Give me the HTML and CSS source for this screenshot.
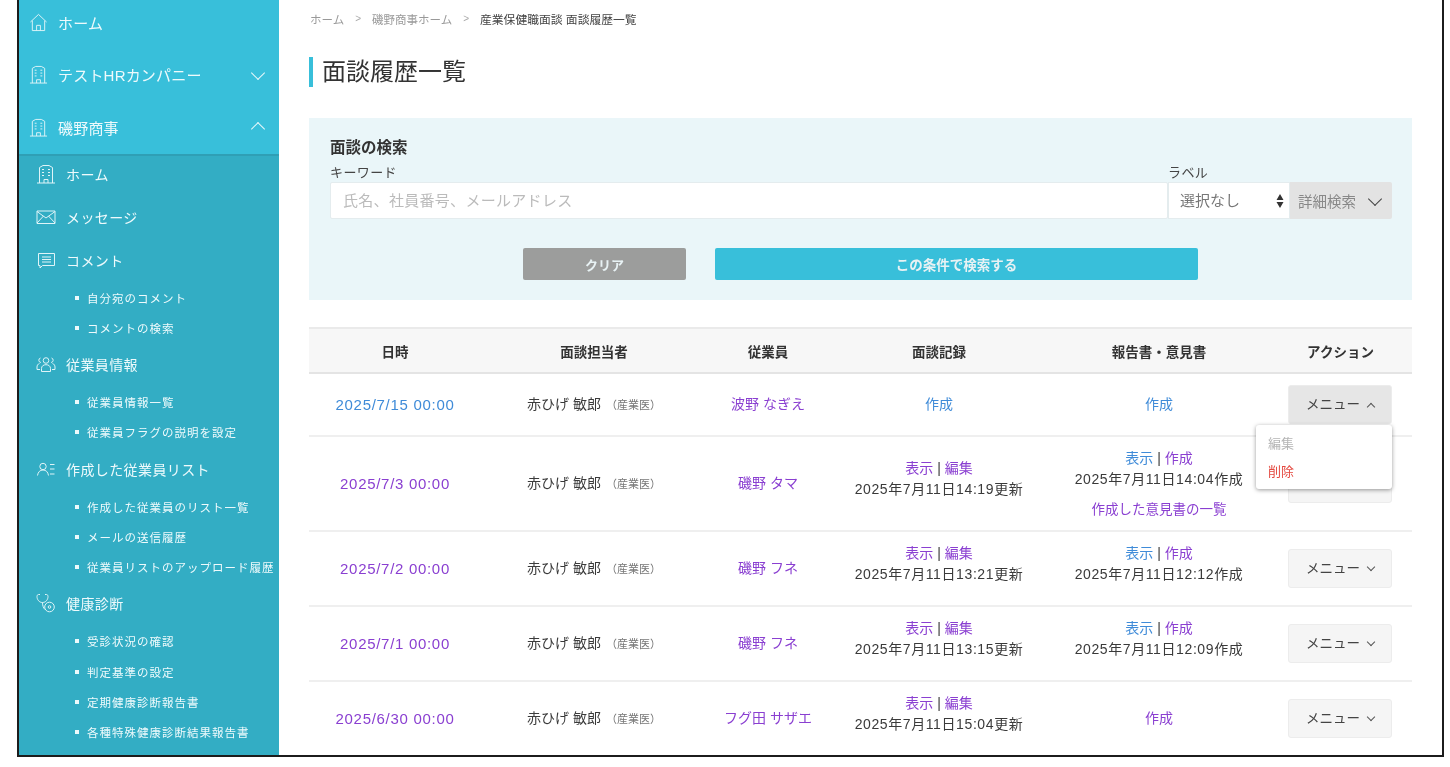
FILE: index.html
```html
<!DOCTYPE html>
<html lang="ja">
  <head>
    <meta charset="UTF-8" />
    <meta name="viewport" content="width=device-width, initial-scale=1.0" />
    <title>面談履歴一覧</title>
    <link rel="stylesheet" href="styles.css">
  </head>
  <body>
    <svg class="icon-defs" width="0" height="0" aria-hidden="true">
      <symbol id="i-home" viewBox="0 0 20 20">
        <path d="M1.5 9.5 10 1.5l8.500 8M3.500 8v10.500h13V8M8 18.500v-5.500h4v5.500" />
      </symbol>
      <symbol id="i-building" viewBox="0 0 20 20">
        <path d="M1 19h18M3.500 19V3.500L7 1.500h6l3.500 2V19M8 19v-3.500h4V19M6 5.500h2M12 5.500h2M6 8.500h2M12 8.500h2M6 11.500h2M12 11.500h2" />
      </symbol>
      <symbol id="i-mail" viewBox="0 0 20 20">
        <path d="M1 4h18v12.500H1zM1 4.500l9 6.500 9-6.500M1 16l6.500-7M19 16l-6.500-7" />
      </symbol>
      <symbol id="i-comment" viewBox="0 0 20 20">
        <path d="M2.500 3.500h16v12H6.500L4 18v-2.500H2.500zM6 7h9M6 9.500h9M6 12h9" />
      </symbol>
      <symbol id="i-users" viewBox="0 0 20 20">
        <circle cx="10" cy="6.500" r="2.800" />
        <path d="M5.500 17.500v-3c0-2.500 2-3.800 4.500-3.800s4.500 1.300 4.500 3.800v3zM4.500 4a2.300 2.300 0 0 0 .4 4.500M15.500 4a2.300 2.300 0 0 1-.4 4.500M3.500 9.500C1.800 10 1 11.500 1 13v2.500h3M16.500 9.500c1.700.5 2.500 2 2.500 3.500v2.500h-3" />
      </symbol>
      <symbol id="i-list" viewBox="0 0 20 20">
        <circle cx="7" cy="7.500" r="3.200" />
        <path d="M1.500 16.500c.5-3.500 2.500-5.500 5.500-5.500s5 2 5.500 5.500M14 5.500h4.500M14 10h4.500M14 15h4.500" />
      </symbol>
      <symbol id="i-scope" viewBox="0 0 20 20">
        <path d="M4 1.500H2.500C1.500 1.500 1 2.500 1 3.500 1 6.500 3 9.500 6.500 9.500S12 6.500 12 3.500c0-1-.5-2-1.500-2H9M6.500 9.500c0 3.500 1 5.500 2.500 7" />
        <circle cx="13.500" cy="14" r="4.800" />
        <circle cx="13.500" cy="14" r="1.300" />
      </symbol>
    </svg>

    <div class="frame">
      <nav class="sidebar">
        <div class="nav-top">
          <a class="top-item"><svg class="icon"><use href="#i-home" /></svg>ホーム</a>
          <a class="top-item"><svg class="icon"><use href="#i-building" /></svg>テストHRカンパニー<span class="chev chev-down"></span></a>
          <a class="top-item"><svg class="icon"><use href="#i-building" /></svg>磯野商事<span class="chev chev-up"></span></a>
        </div>
        <div class="nav-sub">
          <a class="sub-item"><svg class="icon"><use href="#i-building" /></svg>ホーム</a>
          <a class="sub-item"><svg class="icon"><use href="#i-mail" /></svg>メッセージ</a>
          <a class="sub-item"><svg class="icon"><use href="#i-comment" /></svg>コメント</a>
          <ul class="leaf-list">
            <li>自分宛のコメント</li>
            <li>コメントの検索</li>
          </ul>
          <a class="sub-item"><svg class="icon"><use href="#i-users" /></svg>従業員情報</a>
          <ul class="leaf-list">
            <li>従業員情報一覧</li>
            <li>従業員フラグの説明を設定</li>
          </ul>
          <a class="sub-item"><svg class="icon"><use href="#i-list" /></svg>作成した従業員リスト</a>
          <ul class="leaf-list">
            <li>作成した従業員のリスト一覧</li>
            <li>メールの送信履歴</li>
            <li>従業員リストのアップロード履歴</li>
          </ul>
          <a class="sub-item"><svg class="icon"><use href="#i-scope" /></svg>健康診断</a>
          <ul class="leaf-list">
            <li>受診状況の確認</li>
            <li>判定基準の設定</li>
            <li>定期健康診断報告書</li>
            <li>各種特殊健康診断結果報告書</li>
          </ul>
        </div>
      </nav>

      <main class="main">
        <div class="breadcrumb">
          <span>ホーム</span><i>&gt;</i><span>磯野商事ホーム</span><i>&gt;</i><b>産業保健職面談 面談履歴一覧</b>
        </div>
        <h1 class="page-title">面談履歴一覧</h1>

        <section class="search">
          <h2>面談の検索</h2>
          <div class="search-row">
            <label class="field field-key">
              <span>キーワード</span>
              <input type="text" placeholder="氏名、社員番号、メールアドレス" />
            </label>
            <label class="field field-label">
              <span>ラベル</span>
              <div class="select">
                <select><option>選択なし</option></select>
                <svg class="updown" viewBox="0 0 8 16"><path d="M4 1 7.500 7h-7zM4 15 .5 9h7z" /></svg>
              </div>
            </label>
            <button class="detail-btn" type="button">詳細検索<span class="chev chev-down"></span></button>
          </div>
          <div class="search-actions">
            <button class="btn btn-clear" type="button">クリア</button>
            <button class="btn btn-submit" type="button">この条件で検索する</button>
          </div>
        </section>

        <table class="history">
          <colgroup>
            <col class="c1" /><col class="c2" /><col class="c3" /><col class="c4" /><col class="c5" /><col class="c6" />
          </colgroup>
          <thead>
            <tr>
              <th>日時</th><th>面談担当者</th><th>従業員</th><th>面談記録</th><th>報告書・意見書</th><th>アクション</th>
            </tr>
          </thead>
          <tbody>
            <tr class="r1">
              <td class="date"><a class="new">2025/7/15 00:00</a></td>
              <td>赤ひげ 敏郎<small>（産業医）</small></td>
              <td><a>波野 なぎえ</a></td>
              <td><a class="new">作成</a></td>
              <td><a class="new">作成</a></td>
              <td class="action">
                <div class="menu-wrap">
                  <button class="menu-btn open" type="button">メニュー<span class="chev chev-up"></span></button>
                  <div class="menu-pop">
                    <div class="off">編集</div>
                    <div class="del">削除</div>
                  </div>
                </div>
              </td>
            </tr>
            <tr class="r2">
              <td class="date"><a>2025/7/3 00:00</a></td>
              <td>赤ひげ 敏郎<small>（産業医）</small></td>
              <td><a>磯野 タマ</a></td>
              <td class="log"><a>表示</a> | <a>編集</a><br /><span class="stamp">2025年7月11日14:19更新</span></td>
              <td><a class="new">表示</a> | <a>作成</a><br /><span class="stamp">2025年7月11日14:04作成</span><div class="opinions"><a>作成した意見書の一覧</a></div></td>
              <td class="action"><button class="menu-btn" type="button">メニュー<span class="chev chev-down"></span></button></td>
            </tr>
            <tr class="r3">
              <td class="date"><a>2025/7/2 00:00</a></td>
              <td>赤ひげ 敏郎<small>（産業医）</small></td>
              <td><a>磯野 フネ</a></td>
              <td class="log"><a>表示</a> | <a>編集</a><br /><span class="stamp">2025年7月11日13:21更新</span></td>
              <td class="log"><a class="new">表示</a> | <a>作成</a><br /><span class="stamp">2025年7月11日12:12作成</span></td>
              <td class="action"><button class="menu-btn" type="button">メニュー<span class="chev chev-down"></span></button></td>
            </tr>
            <tr class="r3">
              <td class="date"><a>2025/7/1 00:00</a></td>
              <td>赤ひげ 敏郎<small>（産業医）</small></td>
              <td><a>磯野 フネ</a></td>
              <td class="log"><a>表示</a> | <a>編集</a><br /><span class="stamp">2025年7月11日13:15更新</span></td>
              <td class="log"><a class="new">表示</a> | <a>作成</a><br /><span class="stamp">2025年7月11日12:09作成</span></td>
              <td class="action"><button class="menu-btn" type="button">メニュー<span class="chev chev-down"></span></button></td>
            </tr>
            <tr class="r3">
              <td class="date"><a>2025/6/30 00:00</a></td>
              <td>赤ひげ 敏郎<small>（産業医）</small></td>
              <td><a>フグ田 サザエ</a></td>
              <td class="log"><a>表示</a> | <a>編集</a><br /><span class="stamp">2025年7月11日15:04更新</span></td>
              <td><a>作成</a></td>
              <td class="action"><button class="menu-btn" type="button">メニュー<span class="chev chev-down"></span></button></td>
            </tr>
          </tbody>
        </table>
      </main>
    </div>
  </body>
</html>
```

FILE: styles.css
```css
* {
  box-sizing: border-box;
}

body {
  margin: 0;
  background: #fff;
  color: #333;
  font-family: "Liberation Sans", "Noto Sans CJK JP", sans-serif;
  font-size: 14px;
}

.icon-defs {
  position: absolute;
}

.frame {
  display: flex;
  width: 1427px;
  height: 757px;
  margin-left: 17px;
  border-left: 2px solid #1c1c1c;
  border-right: 2px solid #1c1c1c;
  border-bottom: 2px solid #1c1c1c;
  overflow: hidden;
  filter: blur(0.5px);
}

/* sidebar */
.sidebar {
  flex: 0 0 260px;
  background: #33adc4;
  color: #eefafc;
  overflow: hidden;
}

.nav-top {
  margin-top: -4px;
  background: #38bfda;
  border-bottom: 2px solid #2f9fb5;
}

.top-item {
  display: flex;
  align-items: center;
  height: 52.5px;
  padding: 0 10px;
  font-size: 15px;
  letter-spacing: 0.2px;
}

.top-item .icon {
  margin-right: 10px;
}

.top-item .chev {
  margin-left: auto;
  margin-right: 6px;
  width: 10px;
  height: 10px;
  border-width: 1.800px;
  border-color: #e8f8fb;
}

.icon {
  flex: none;
  width: 19px;
  height: 19px;
  fill: none;
  stroke: #dff4f8;
  stroke-width: 1;
}

.chev {
  display: inline-block;
  width: 7px;
  height: 7px;
  border-right: 1.500px solid #555;
  border-bottom: 1.500px solid #555;
}

.chev-down {
  transform: translateY(-2px) rotate(45deg);
}

.chev-up {
  transform: translateY(2px) rotate(-135deg);
}

.nav-sub {
  margin-top: -1px;
}

.sub-item {
  display: flex;
  align-items: center;
  height: 38px;
  padding-left: 17px;
  font-size: 14px;
  letter-spacing: 0.4px;
}

.sub-item .icon {
  width: 20px;
  height: 20px;
  margin-right: 10px;
}

.sub-item + .sub-item {
  margin-top: 5px;
}

.leaf-list + .sub-item {
  margin-top: 2px;
}

.leaf-list {
  list-style: none;
  margin: 4px 0 0;
  padding: 0 0 0 56px;
}

.leaf-list li {
  display: flex;
  align-items: center;
  height: 30.250px;
  font-size: 11.500px;
  letter-spacing: 1px;
  white-space: nowrap;
}

.leaf-list li::before {
  content: "";
  flex: none;
  width: 4px;
  height: 4px;
  margin-right: 8px;
  background: #eefafc;
}

/* main */
.main {
  flex: 1;
  min-width: 0;
  padding: 0 30px;
  background: #fff;
}

.breadcrumb {
  display: flex;
  align-items: center;
  height: 37px;
  padding-left: 1px;
  font-size: 11.500px;
  color: #999;
}

.breadcrumb i {
  margin: 0 11px;
  font-style: normal;
  font-size: 10px;
  color: #aaa;
}

.breadcrumb b {
  font-weight: 400;
  font-size: 11.800px;
  color: #444;
}

.page-title {
  display: flex;
  align-items: center;
  height: 30px;
  margin: 20px 0 31px;
  padding-left: 9px;
  border-left: 4px solid #38bfda;
  font-size: 24px;
  line-height: 28px;
  font-weight: 400;
  color: #333;
}

.search {
  height: 182px;
  padding: 20px 20px 0 21px;
  background: #eaf6f9;
}

.search h2 {
  margin: 0;
  font-size: 15.500px;
  line-height: 20px;
  color: #333;
}

.search-row {
  display: flex;
  align-items: flex-end;
  margin-top: 7px;
}

.field span {
  display: block;
  font-size: 13px;
  line-height: 16px;
  margin-bottom: 1px;
  letter-spacing: 0.4px;
  color: #444;
}

.field-key {
  flex: 0 0 838px;
}

.field input {
  display: block;
  width: 100%;
  height: 37px;
  padding: 0 12px;
  border: 1px solid #e4ecee;
  border-radius: 2px;
  background: #fff;
  font: inherit;
  font-size: 15px;
  letter-spacing: 0.3px;
}

.field input::placeholder {
  color: #bbb;
}

.field-label {
  flex: 0 0 122px;
}

.select {
  position: relative;
}

.select select {
  display: block;
  width: 100%;
  height: 37px;
  padding: 0 11px;
  border: 1px solid #e4ecee;
  background: #fff;
  font: inherit;
  font-size: 15px;
  color: #777;
  appearance: none;
}

.updown {
  position: absolute;
  top: 11px;
  right: 6px;
  width: 8px;
  height: 16px;
  fill: #333;
}

.detail-btn {
  display: flex;
  align-items: center;
  justify-content: space-between;
  width: 102px;
  height: 37px;
  padding: 0 12px 0 8px;
  border: 0;
  border-radius: 0 2px 2px 0;
  background: #e3e3e3;
  font: inherit;
  font-size: 14.500px;
  color: #888;
}

.detail-btn .chev {
  width: 10px;
  height: 10px;
  border-width: 1.600px;
  border-color: #444;
}

.search-actions {
  display: flex;
  gap: 29px;
  margin: 29px 0 0 193px;
}

.btn {
  height: 32px;
  border: 0;
  border-radius: 2px;
  color: #e8f2f4;
  font: inherit;
  font-size: 13px;
  font-weight: 700;
}

.btn-clear {
  width: 163px;
  background: #9c9d9c;
}

.btn-submit {
  width: 483px;
  background: #38bfda;
  font-size: 13.500px;
}

/* table */
.history {
  width: 1103px;
  margin-top: 27px;
  table-layout: fixed;
  border-collapse: collapse;
}

.c1 { width: 172px; }
.c2 { width: 226px; }
.c3 { width: 122px; }
.c4 { width: 220px; }
.c5 { width: 220px; }
.c6 { width: 143px; }

.history th {
  height: 45px;
  background: #f7f7f7;
  border-top: 2px solid #eaeaea;
  border-bottom: 2px solid #e4e4e4;
  font-size: 13.500px;
  color: #333;
}

.history td {
  padding: 0;
  border-bottom: 2px solid #efefef;
  text-align: center;
  font-size: 14px;
  line-height: 21px;
  color: #3a3a3a;
}

.history tr.r1 td { height: 63px; }
.history tr.r2 td { height: 95px; }
.history tr.r3 td { height: 75px; }

.history td.log {
  padding-bottom: 10px;
}

.history td.action {
  padding-right: 1px;
}

.stamp {
  letter-spacing: 0.6px;
}

.history a {
  color: #8a3fd1;
}

.history a.new {
  color: #3f8bd8;
}

.history .date {
  font-size: 15px;
  letter-spacing: 0.7px;
}

.history small {
  margin-left: 5px;
  font-size: 11px;
  color: #777;
}

.opinions {
  margin-top: 9px;
  font-size: 13.500px;
}

.menu-wrap {
  position: relative;
  display: inline-block;
  vertical-align: middle;
}

.menu-btn {
  display: inline-flex;
  align-items: center;
  justify-content: center;
  gap: 8px;
  width: 104px;
  height: 39px;
  border: 1px solid #ececec;
  border-radius: 3px;
  background: #f5f5f5;
  font: inherit;
  font-size: 13.500px;
  color: #444;
  vertical-align: middle;
}

.menu-btn.open {
  background: #e6e6e6;
}

.menu-btn .chev {
  width: 6px;
  height: 6px;
  border-width: 1px;
}

.menu-pop {
  position: absolute;
  z-index: 2;
  top: 40px;
  right: 0;
  width: 136px;
  height: 64px;
  padding: 5px 12px;
  border-radius: 3px;
  background: #fff;
  box-shadow: 0 1px 4px rgba(0, 0, 0, 0.4);
  text-align: left;
  font-size: 13px;
  line-height: 28px;
}

.menu-pop .off {
  color: #b5b5b5;
}

.menu-pop .del {
  color: #e4483f;
}
```
